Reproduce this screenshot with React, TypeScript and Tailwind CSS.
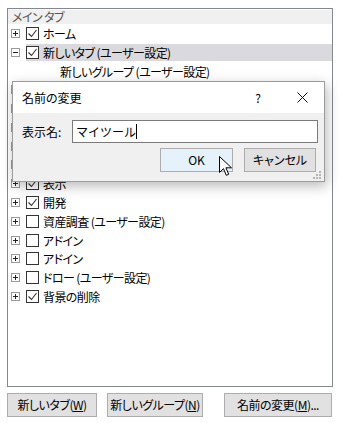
import type { ReactNode } from 'react';

type Row = { label: string; checked: boolean; open?: boolean; selected?: boolean; child?: boolean; hidden?: boolean };

// 挿入〜参考資料の行はダイアログの下に隠れている
const rows: Row[] = [
  { label: 'ホーム', checked: true },
  { label: '新しいタブ (ユーザー設定)', checked: true, open: true, selected: true },
  { label: '新しいグループ (ユーザー設定)', checked: false, child: true },
  { label: '', checked: true, hidden: true },
  { label: '', checked: true, hidden: true },
  { label: '', checked: true, hidden: true },
  { label: '', checked: true, hidden: true },
  { label: '', checked: true, hidden: true },
  { label: '表示', checked: true },
  { label: '開発', checked: true },
  { label: '資産調査 (ユーザー設定)', checked: false },
  { label: 'アドイン', checked: false },
  { label: 'アドイン', checked: false },
  { label: 'ドロー (ユーザー設定)', checked: false },
  { label: '背景の削除', checked: true },
];

function Expander({ open }: { open?: boolean }) {
  return (
    <svg width="9" height="9" viewBox="0 0 9 9" className="shrink-0">
      <rect x="0.5" y="0.5" width="8" height="8" fill="#fff" stroke="#9a9a9a" />
      <path d="M2 4.5h5" stroke="#222" />
      {!open && <path d="M4.5 2v5" stroke="#222" />}
    </svg>
  );
}

function Check({ checked }: { checked: boolean }) {
  return (
    <svg width="13" height="13" viewBox="0 0 13 13" className="shrink-0">
      <rect x="0.5" y="0.5" width="12" height="12" fill="#fff" stroke="#333" />
      {checked && <path d="M2.5 6.5l3 3 5-6.5" fill="none" stroke="#333" strokeWidth="1.1" />}
    </svg>
  );
}

function Btn({ children, className }: { children: ReactNode; className: string }) {
  return (
    <div className={`h-[24px] flex items-center justify-center whitespace-nowrap bg-[#e1e1e1] border border-[#adadad] ${className}`}>
      {children}
    </div>
  );
}

export default function App() {
  return (
    <div className="relative w-[341px] h-[423px] bg-white text-[12px] text-black font-['Noto_Sans_CJK_JP',sans-serif] [font-feature-settings:'palt'] overflow-hidden">
      {/* ツリー */}
      <div className="absolute left-[7px] top-[8px] w-[326px] h-[379px] border border-[#828790] bg-white pt-[1px] tracking-[-0.6px]">
        <div className="h-[14px] bg-[#f0f0f0] pl-[4px] leading-[14px] text-[#555]">メイン タブ</div>
        {rows.map((r, i) => (
          <div key={i} className="h-[18.8px] flex items-center">
            {r.child ? (
              <div className="pl-[52px] leading-[19px]">{r.label}</div>
            ) : (
              <>
                <div className="ml-[3px] mr-[6px]">
                  <Expander open={r.open} />
                </div>
                <div className={`flex-1 h-[17px] flex items-center gap-[4px] ${r.selected ? 'bg-[#dadade]' : ''}`}>
                  <Check checked={r.checked} />
                  {!r.hidden && <span className="leading-[17px]">{r.label}</span>}
                </div>
              </>
            )}
          </div>
        ))}
      </div>

      {/* 名前の変更 ダイアログ */}
      <div className="absolute left-[12px] top-[81px] w-[313px] h-[101px] border border-[#9c9c9c] bg-[#f0f0f0] flex flex-col shadow-[2px_4px_12px_rgba(0,0,0,0.28)]">
        <div className="h-[31px] bg-white flex items-center pl-[9px] pr-[16px] shrink-0">
          <span className="flex-1">名前の変更</span>
          <span className="w-[10px] text-center mr-[34px]">?</span>
          <svg width="11" height="11" viewBox="0 0 11 11">
            <path d="M0.5 0.5l10 10M10.5 0.5l-10 10" stroke="#111" />
          </svg>
        </div>
        <div className="flex-1 relative pl-[9px] pr-[6px] pt-[7px]">
          <div className="flex items-center">
            <span className="w-[50px]">表示名:</span>
            <div className="flex-1 h-[23px] bg-white border border-[#7a7a7a] flex items-center pl-[3px] text-[12px] [font-feature-settings:normal]">
              マイツール
              <span className="inline-block w-[1px] h-[15px] bg-black" />
            </div>
          </div>
          <div className="flex justify-end gap-[11px] mt-[5px] pr-[2px]">
            <Btn className="w-[73px] bg-[#e5f1fb] border-[#0078d7]">OK</Btn>
            <Btn className="w-[72px]">キャンセル</Btn>
          </div>
          <svg width="8" height="8" viewBox="0 0 8 8" className="absolute right-[3px] bottom-[2px]">
            <g fill="#b5b5b5">
              <rect x="6" y="0" width="2" height="2" />
              <rect x="3" y="3" width="2" height="2" />
              <rect x="6" y="3" width="2" height="2" />
              <rect x="0" y="6" width="2" height="2" />
              <rect x="3" y="6" width="2" height="2" />
              <rect x="6" y="6" width="2" height="2" />
            </g>
          </svg>
        </div>
      </div>

      {/* マウスカーソル */}
      <svg width="14" height="22" viewBox="0 0 14 22" className="absolute left-[219px] top-[156px]">
        <path d="M0.5 0.5v16l4-3.8 2.8 6.6 2.4-1-2.8-6.5h5.6z" fill="#fff" stroke="#000" strokeLinejoin="round" />
      </svg>

      {/* 下部ボタン */}
      <div className="absolute left-[7px] top-[393px] flex tracking-[-0.5px]">
        <Btn className="w-[90px]">
          新しいタブ(<span className="underline">W</span>)
        </Btn>
        <Btn className="w-[96px] ml-[10px]">
          新しいグループ(<span className="underline">N</span>)
        </Btn>
        <Btn className="w-[108px] ml-[21px]">
          名前の変更(<span className="underline">M</span>)...
        </Btn>
      </div>
    </div>
  );
}
